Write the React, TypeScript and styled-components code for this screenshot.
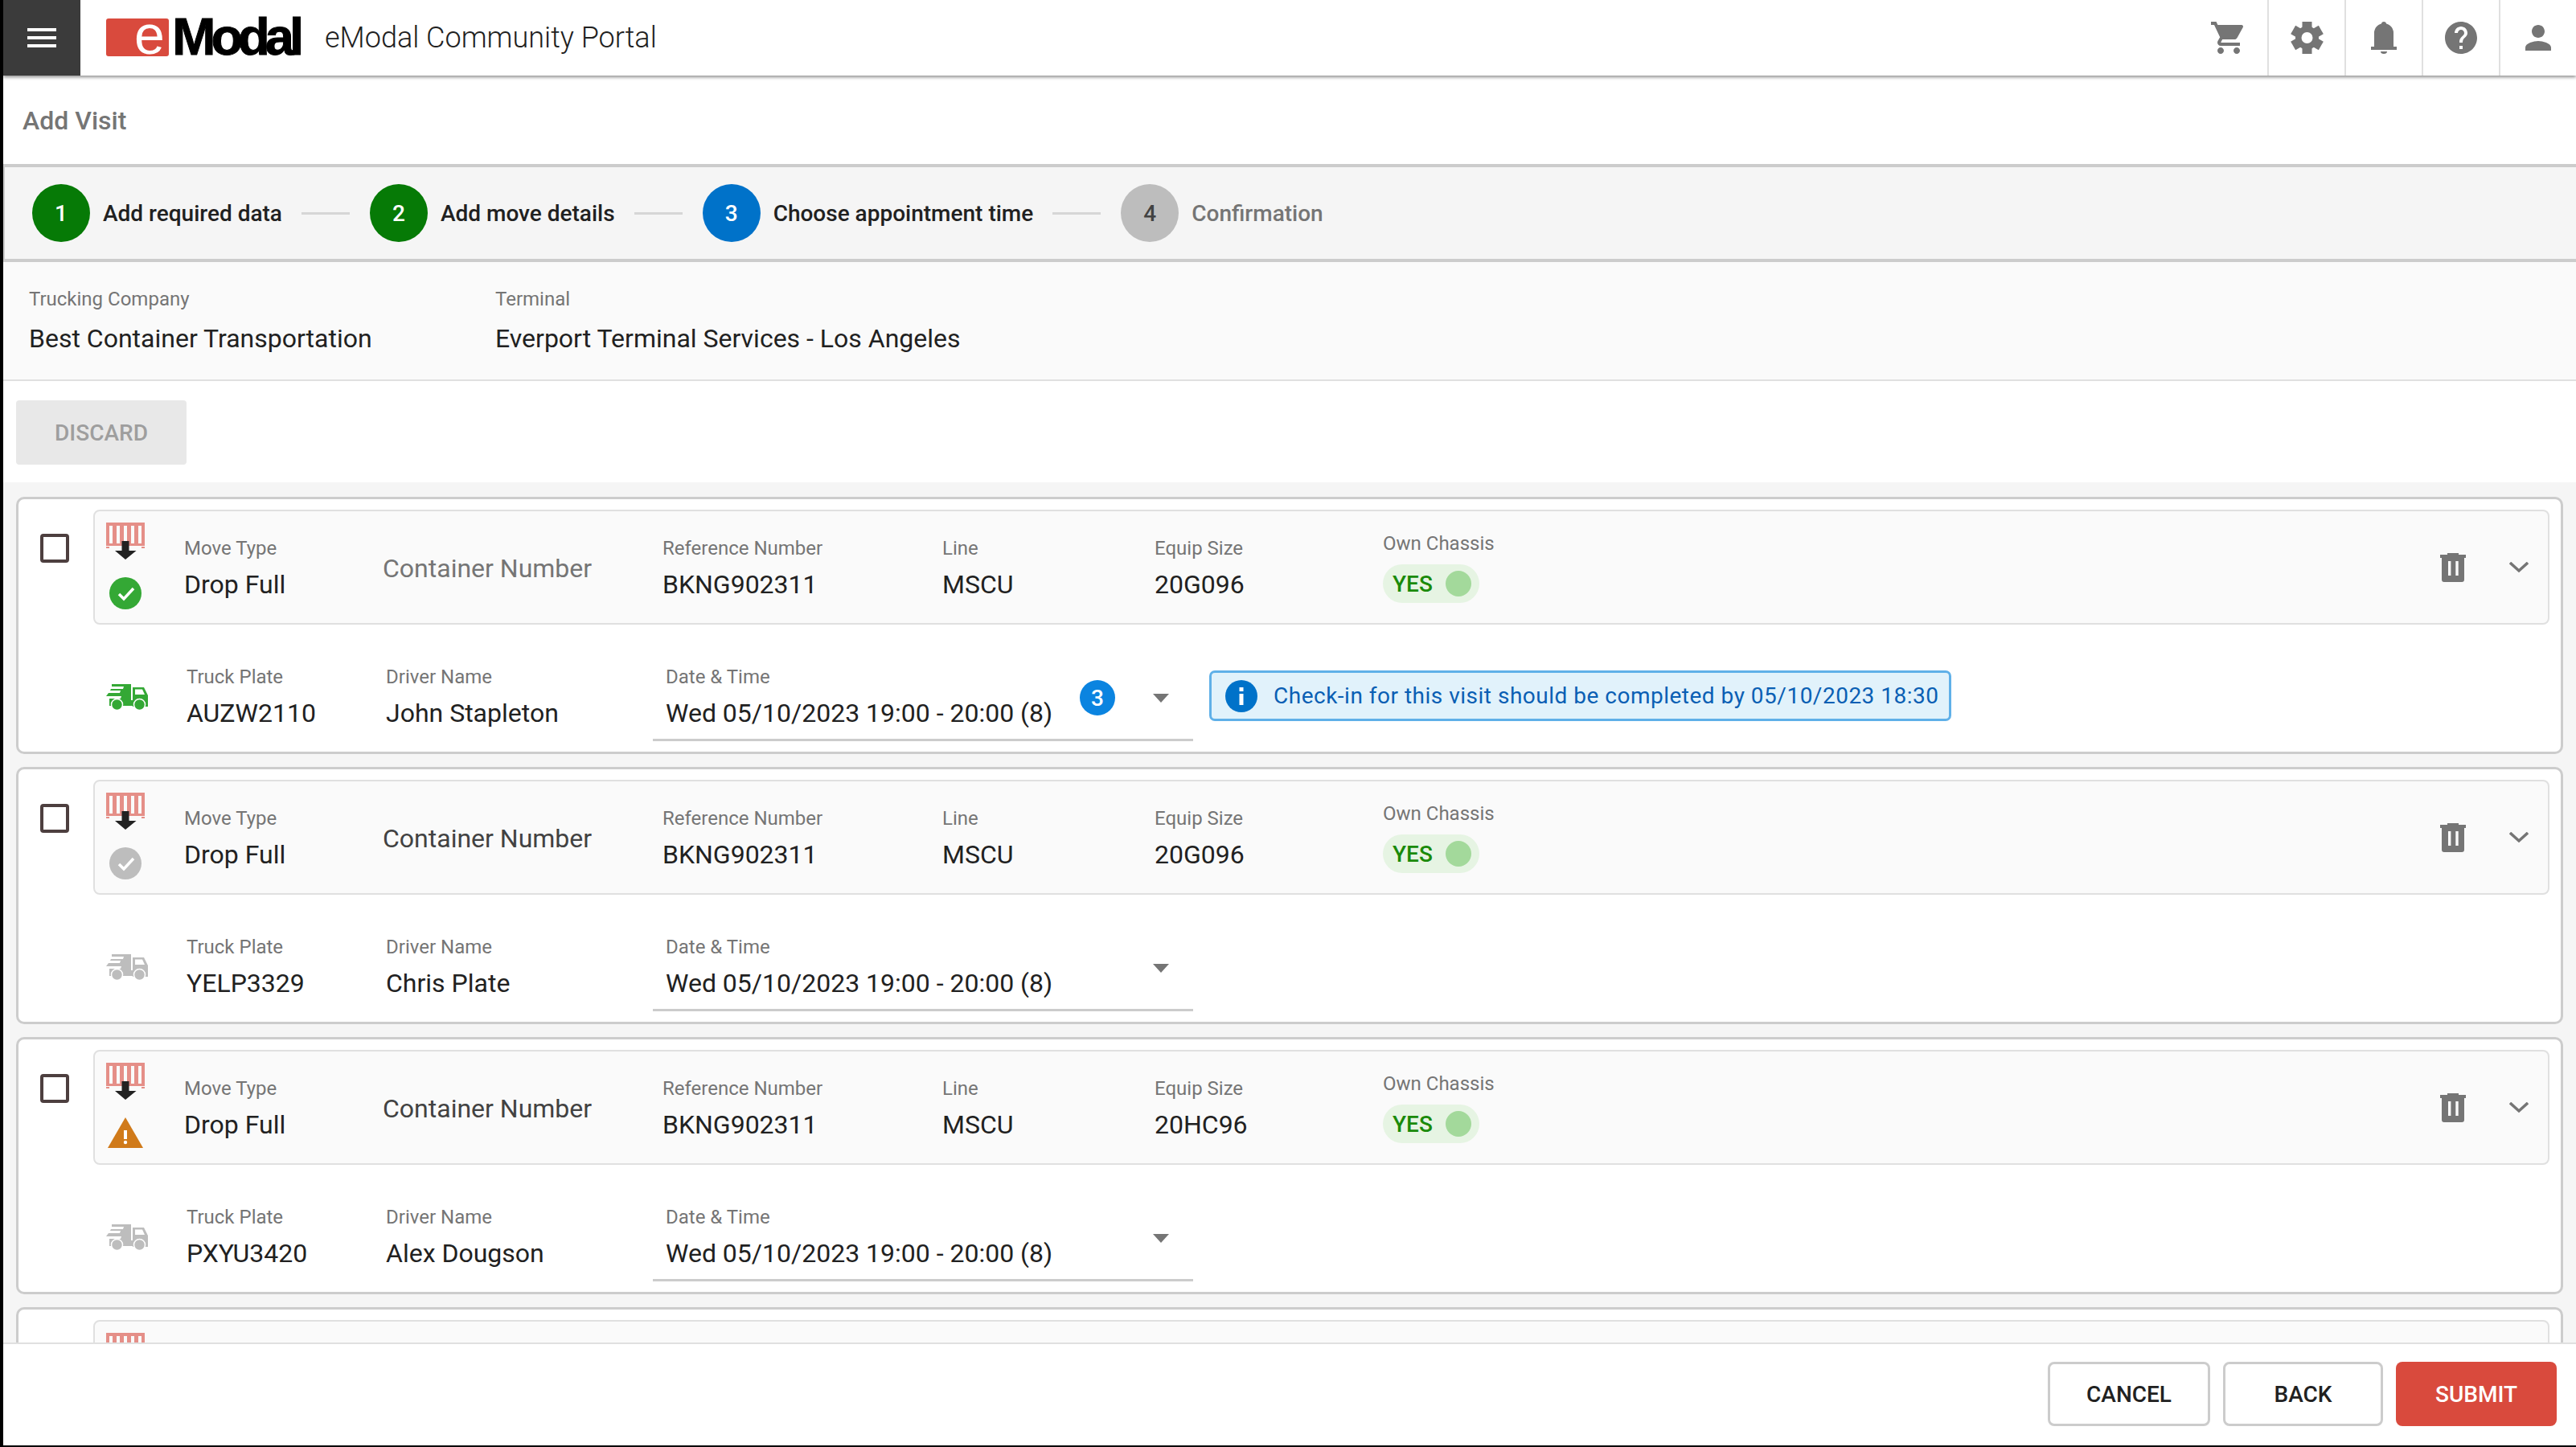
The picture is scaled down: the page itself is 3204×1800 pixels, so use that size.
import React from "react";
import styled, { createGlobalStyle } from "styled-components";
import { MdHelp, MdMenu, MdPerson, MdShoppingCart } from "react-icons/md";

const GlobalStyle = createGlobalStyle`
  html, body {
    margin: 0;
    padding: 0;
    background: #000;
  }
  * {
    box-sizing: border-box;
  }
`;

const Page = styled.div`
  width: 3204px;
  height: 1800px;
  padding: 0 0 2px 4px;
  background: #000;
  font-family: Roboto, "Liberation Sans", sans-serif;
  color: #212121;
  overflow: hidden;
`;

const Shell = styled.div`
  height: 100%;
  display: flex;
  flex-direction: column;
  background: #fff;
`;

const Header = styled.header`
  height: 94px;
  flex: none;
  display: flex;
  position: relative;
  background: #fff;
  box-shadow: 0 2px 4px rgba(0, 0, 0, 0.45);
`;

const MenuButton = styled.div`
  width: 96px;
  display: flex;
  align-items: center;
  justify-content: center;
  background: #3b3b3b;
  color: #fff;
  font-size: 48px;
`;

const Logo = styled.div`
  width: 240px;
  margin-left: 32px;
  margin-top: 22px;
  height: 48px;
  display: flex;
`;

const LogoMark = styled.span`
  width: 79px;
  height: 47px;
  margin-top: 1px;
  border-radius: 3px;
  background: #d94a3d;
  color: #fff;
  font-family: "Liberation Sans", sans-serif;
  font-size: 68px;
  line-height: 40px;
  padding-left: 35px;
`;

const LogoWord = styled.span`
  margin-left: 4px;
  font-family: "Liberation Sans", sans-serif;
  font-weight: 700;
  font-size: 65px;
  line-height: 48px;
  letter-spacing: -6px;
  color: #000;
  -webkit-text-stroke: 1px #000;
`;

const PortalTitle = styled.div`
  margin-left: 32px;
  align-self: center;
  font-size: 36px;
  font-weight: 300;
  color: #212121;
`;

const HeaderIcons = styled.div`
  margin-left: auto;
  display: flex;
`;

const HeaderIcon = styled.div<{ $first?: boolean }>`
  width: 96px;
  display: flex;
  align-items: center;
  justify-content: center;
  font-size: 48px;
  color: #757575;
  border-left: ${(p) => (p.$first ? "none" : "2px solid #e0e0e0")};
`;

const PageTitle = styled.h1`
  margin: 0;
  height: 110px;
  flex: none;
  display: flex;
  align-items: center;
  padding-left: 24px;
  padding-top: 2px;
  font-size: 32px;
  font-weight: 500;
  color: #757575;
`;

const Stepper = styled.div`
  height: 122px;
  flex: none;
  display: flex;
  align-items: center;
  padding-left: 34px;
  background: #f5f5f5;
  border-top: 4px solid #ccc;
  border-bottom: 4px solid #ccc;
  border-left: 2px solid #ccc;
`;

const StepCircle = styled.span<{ $color: string; $dark?: boolean }>`
  width: 72px;
  height: 72px;
  flex: none;
  border-radius: 50%;
  display: flex;
  align-items: center;
  justify-content: center;
  background: ${(p) => p.$color};
  color: ${(p) => (p.$dark ? "#424242" : "#fff")};
  font-size: 28px;
  font-weight: 500;
`;

const StepLabel = styled.span<{ $muted?: boolean }>`
  margin-left: 16px;
  font-size: 28px;
  font-weight: 500;
  color: ${(p) => (p.$muted ? "#757575" : "#212121")};
`;

const StepLine = styled.span`
  width: 60px;
  height: 3px;
  margin: 0 25px 0 24px;
  background: #d6d6d6;
`;

const Summary = styled.div`
  height: 148px;
  flex: none;
  display: flex;
  padding: 28px 0 0 32px;
  background: #fafafa;
  border-bottom: 2px solid #e0e0e0;
`;

const SummaryField = styled.div<{ $w: number }>`
  width: ${(p) => p.$w}px;
`;

const Actions = styled.div`
  height: 126px;
  flex: none;
  padding: 24px 0 0 16px;
`;

const DiscardButton = styled.button`
  width: 212px;
  height: 80px;
  border: none;
  border-radius: 4px;
  background: #e8e8e8;
  color: #9e9e9e;
  font-family: inherit;
  font-size: 28px;
  font-weight: 500;
`;

const VisitList = styled.div`
  flex: 1;
  min-height: 0;
  overflow: hidden;
  display: flex;
  flex-direction: column;
  gap: 16px;
  padding: 18px 16px 0 16px;
  background: #f5f5f5;
`;

const VisitCard = styled.section`
  height: 320px;
  flex: none;
  padding: 13px 14px 0 0;
  background: #fff;
  border: 3px solid #ccc;
  border-radius: 10px;
`;

const CardTop = styled.div`
  display: flex;
`;

const CheckCol = styled.div`
  width: 93px;
  flex: none;
  padding: 30px 0 0 27px;
`;

const Checkbox = styled.span`
  display: block;
  width: 36px;
  height: 36px;
  border: 4px solid #4d3f3f;
  border-radius: 4px;
`;

const MoveBox = styled.div`
  flex: 1;
  height: 143px;
  display: flex;
  align-items: flex-start;
  padding: 14px 0 0 14px;
  background: #fafafa;
  border: 2px solid #e0e0e0;
  border-radius: 8px;
`;

const MoveIcons = styled.div`
  width: 97px;
  flex: none;
  display: flex;
  flex-direction: column;
  align-items: flex-start;
`;

const StatusSlot = styled.div`
  width: 48px;
  margin-top: 22px;
  display: flex;
  justify-content: center;
`;

const Field = styled.div<{ $w: number }>`
  width: ${(p) => p.$w}px;
  flex: none;
`;

const MoveField = styled(Field)`
  padding-top: 14px;
`;

const FieldLabel = styled.div`
  height: 36px;
  font-size: 24px;
  line-height: 36px;
  color: #757575;
`;

const FieldValue = styled.div`
  height: 52px;
  margin-top: 1px;
  font-size: 32px;
  line-height: 52px;
  color: #212121;
  white-space: nowrap;
`;

const SummaryValue = styled(FieldValue)`
  margin-top: 5px;
`;

const ContainerNumber = styled.div<{ $w: number; $muted?: boolean }>`
  width: ${(p) => p.$w}px;
  flex: none;
  padding-top: 31px;
  font-size: 32px;
  line-height: 52px;
  color: ${(p) => (p.$muted ? "#757575" : "#424242")};
`;

const ChassisField = styled.div`
  flex: 1;
  padding-top: 8px;
`;

const Toggle = styled.div`
  width: 120px;
  height: 48px;
  margin-top: 8px;
  display: flex;
  align-items: center;
  justify-content: space-between;
  padding: 0 10px 0 12px;
  border-radius: 24px;
  background: #e6f4e3;
  color: #1a8a0a;
  font-size: 28px;
  font-weight: 500;
`;

const ToggleKnob = styled.span`
  width: 32px;
  height: 32px;
  border-radius: 50%;
  background: #a3d99b;
`;

const RowIcons = styled.div`
  display: flex;
  align-items: center;
  gap: 54px;
  margin-top: 38px;
  padding-right: 24px;
`;

const CardBottom = styled.div`
  display: flex;
  align-items: flex-start;
  padding: 47px 0 0 109px;
`;

const TruckSlot = styled.div`
  width: 100px;
  flex: none;
  padding-top: 27px;
`;

const DateSelect = styled.div`
  width: 672px;
  height: 98px;
  flex: none;
  position: relative;
  padding-left: 16px;
  border-bottom: 3px solid #ccc;
`;

const CountBadge = styled.span`
  position: absolute;
  left: 531px;
  top: 22px;
  width: 44px;
  height: 44px;
  border-radius: 50%;
  display: flex;
  align-items: center;
  justify-content: center;
  background: #0b84e0;
  color: #fff;
  font-size: 28px;
  font-weight: 500;
`;

const SelectArrow = styled.span`
  position: absolute;
  right: 30px;
  top: 39px;
  border-left: 10px solid transparent;
  border-right: 10px solid transparent;
  border-top: 11px solid #757575;
`;

const InfoBanner = styled.div`
  width: 923px;
  height: 63px;
  flex: none;
  margin: 10px 0 0 20px;
  display: flex;
  align-items: center;
  gap: 20px;
  padding-left: 17px;
  background: #e1f2fb;
  border: 3px solid #5fb0e8;
  border-radius: 7px;
  color: #0a5fb4;
  font-size: 28px;
  letter-spacing: 0.5px;
  white-space: nowrap;
`;

const InfoDot = styled.span`
  width: 40px;
  height: 40px;
  flex: none;
  border-radius: 50%;
  display: flex;
  align-items: center;
  justify-content: center;
  background: #0072c9;
`;

const Footer = styled.footer`
  height: 128px;
  flex: none;
  display: flex;
  justify-content: flex-end;
  gap: 16px;
  padding: 22px 24px 0 0;
  background: #fff;
  border-top: 2px solid #e0e0e0;
`;

const FooterButton = styled.button<{ $w: number; $primary?: boolean }>`
  width: ${(p) => p.$w}px;
  height: 80px;
  border: ${(p) => (p.$primary ? "none" : "3px solid #ccc")};
  border-radius: 8px;
  background: ${(p) => (p.$primary ? "#d94a3d" : "#fff")};
  color: ${(p) => (p.$primary ? "#fff" : "#212121")};
  font-family: inherit;
  font-size: 28px;
  font-weight: 500;
`;

const GearIcon = () => (
  <svg width="41" height="40" viewBox="-20.500 -20 41 40">
    <circle r="14.500" fill="#757575" />
    {[0, 60, 120].map((deg) => (
      <rect
        key={deg}
        x="-6"
        y="-20"
        width="12"
        height="40"
        fill="#757575"
        transform={`rotate(${deg})`}
      />
    ))}
    <circle r="7" fill="#fff" />
  </svg>
);

const BellIcon = () => (
  <svg width="32" height="40" viewBox="0 0 32 40">
    <circle cx="16" cy="3" r="3" fill="#757575" />
    <path
      d="M4 31V14a12 12 0 0 1 24 0v17h4v4H0v-4zM12 37h8a4 3 0 0 1-8 0z"
      fill="#757575"
    />
  </svg>
);

const ContainerDropIcon = () => (
  <svg width="48" height="46" viewBox="0 0 48 46">
    <rect x="0" y="0" width="48" height="29" fill="#e58f88" />
    <rect x="0" y="29" width="48" height="2" fill="#fafafa" />
    <rect x="0" y="30" width="4" height="2" fill="#e58f88" />
    <rect x="44" y="30" width="4" height="2" fill="#e58f88" />
    {[4, 13, 22, 31, 40].map((x) => (
      <rect key={x} x={x} y="4" width="4" height="22" fill="#fafafa" />
    ))}
    <path d="M19.500 23h9v12h9L24 46 11 35h8.500z" fill="#222" />
  </svg>
);

const CheckStatus = ({ color }: { color: string }) => (
  <svg width="40" height="40" viewBox="0 0 40 40">
    <circle cx="20" cy="20" r="20" fill={color} />
    <path d="M12 21l6 6 12-13" fill="none" stroke="#fff" strokeWidth="3.500" />
  </svg>
);

const WarningStatus = () => (
  <svg width="44" height="38" viewBox="0 0 44 38">
    <path d="M22 0l22 38H0z" fill="#d07a1a" />
    <rect x="20" y="16" width="4" height="11" fill="#fff" />
    <circle cx="22" cy="31" r="2.200" fill="#fff" />
  </svg>
);

const TruckIcon = ({ color }: { color: string }) => (
  <svg width="52" height="32" viewBox="0 0 52 32">
    <path d="M7 0h24v22H4v-4h14l1-3H0l3-4h14l1-3H5l1-2h15l1-3H7z" fill={color} />
    <path
      d="M33 4h14l5 10v14H33zM36 6.500V13h12l-3-6.500z"
      fill={color}
      fillRule="evenodd"
    />
    <rect x="4" y="20" width="48" height="7" fill={color} />
    <circle cx="13.500" cy="25.500" r="7" fill={color} stroke="#fff" strokeWidth="1.500" />
    <circle cx="41.500" cy="25.500" r="7" fill={color} stroke="#fff" strokeWidth="1.500" />
  </svg>
);

const TrashIcon = () => (
  <svg width="32" height="36" viewBox="0 0 32 36">
    <path d="M9 0h14v2h9v4H0V2h9z" fill="#757575" />
    <path
      d="M2 6h28v27a3 3 0 0 1-3 3H5a3 3 0 0 1-3-3zM10 10v18h3.400V10zM19.300 10v18h3.400V10z"
      fill="#757575"
      fillRule="evenodd"
    />
  </svg>
);

const ChevronIcon = () => (
  <svg width="24" height="14" viewBox="0 0 24 14">
    <path d="M1 1l11 10L23 1" fill="none" stroke="#757575" strokeWidth="3.500" />
  </svg>
);

const InfoGlyph = () => (
  <svg width="6" height="22" viewBox="0 0 6 22">
    <rect x="0.500" y="0" width="5" height="5" fill="#fff" />
    <rect x="0.500" y="8" width="5" height="14" fill="#fff" />
  </svg>
);

type Visit = {
  status: "done" | "pending" | "warning";
  equip: string;
  plate: string;
  driver: string;
  active?: boolean;
};

const visits: Visit[] = [
  { status: "done", equip: "20G096", plate: "AUZW2110", driver: "John Stapleton", active: true },
  { status: "pending", equip: "20G096", plate: "YELP3329", driver: "Chris Plate" },
  { status: "warning", equip: "20HC96", plate: "PXYU3420", driver: "Alex Dougson" },
];

const steps = [
  { label: "Add required data", color: "#067a06" },
  { label: "Add move details", color: "#067a06" },
  { label: "Choose appointment time", color: "#0072c9" },
  { label: "Confirmation", color: "#bdbdbd", muted: true },
];

function VisitRow({ visit }: { visit: Visit }) {
  return (
    <VisitCard>
      <CardTop>
        <CheckCol>
          <Checkbox />
        </CheckCol>
        <MoveBox>
          <MoveIcons>
            <ContainerDropIcon />
            <StatusSlot>
              {visit.status === "done" && <CheckStatus color="#34a835" />}
              {visit.status === "pending" && <CheckStatus color="#bdbdbd" />}
              {visit.status === "warning" && <WarningStatus />}
            </StatusSlot>
          </MoveIcons>
          <MoveField $w={247}>
            <FieldLabel>Move Type</FieldLabel>
            <FieldValue>Drop Full</FieldValue>
          </MoveField>
          <ContainerNumber $w={348} $muted={visit.active}>
            Container Number
          </ContainerNumber>
          <MoveField $w={348}>
            <FieldLabel>Reference Number</FieldLabel>
            <FieldValue>BKNG902311</FieldValue>
          </MoveField>
          <MoveField $w={264}>
            <FieldLabel>Line</FieldLabel>
            <FieldValue>MSCU</FieldValue>
          </MoveField>
          <MoveField $w={284}>
            <FieldLabel>Equip Size</FieldLabel>
            <FieldValue>{visit.equip}</FieldValue>
          </MoveField>
          <ChassisField>
            <FieldLabel>Own Chassis</FieldLabel>
            <Toggle>
              YES
              <ToggleKnob />
            </Toggle>
          </ChassisField>
          <RowIcons>
            <TrashIcon />
            <ChevronIcon />
          </RowIcons>
        </MoveBox>
      </CardTop>
      <CardBottom>
        <TruckSlot>
          <TruckIcon color={visit.active ? "#34a835" : "#bdbdbd"} />
        </TruckSlot>
        <Field $w={248}>
          <FieldLabel>Truck Plate</FieldLabel>
          <FieldValue>{visit.plate}</FieldValue>
        </Field>
        <Field $w={332}>
          <FieldLabel>Driver Name</FieldLabel>
          <FieldValue>{visit.driver}</FieldValue>
        </Field>
        <DateSelect>
          <FieldLabel>Date &amp; Time</FieldLabel>
          <FieldValue>Wed 05/10/2023 19:00 - 20:00 (8)</FieldValue>
          {visit.active && <CountBadge>3</CountBadge>}
          <SelectArrow />
        </DateSelect>
        {visit.active && (
          <InfoBanner>
            <InfoDot>
              <InfoGlyph />
            </InfoDot>
            Check-in for this visit should be completed by 05/10/2023 18:30
          </InfoBanner>
        )}
      </CardBottom>
    </VisitCard>
  );
}

export default function App(): React.ReactElement {
  return (
    <Page>
      <GlobalStyle />
      <Shell>
        <Header>
          <MenuButton>
            <MdMenu />
          </MenuButton>
          <Logo>
            <LogoMark>e</LogoMark>
            <LogoWord>Modal</LogoWord>
          </Logo>
          <PortalTitle>eModal Community Portal</PortalTitle>
          <HeaderIcons>
            <HeaderIcon $first>
              <MdShoppingCart />
            </HeaderIcon>
            <HeaderIcon>
              <GearIcon />
            </HeaderIcon>
            <HeaderIcon>
              <BellIcon />
            </HeaderIcon>
            <HeaderIcon>
              <MdHelp />
            </HeaderIcon>
            <HeaderIcon>
              <MdPerson />
            </HeaderIcon>
          </HeaderIcons>
        </Header>
        <PageTitle>Add Visit</PageTitle>
        <Stepper>
          {steps.map((step, i) => (
            <React.Fragment key={step.label}>
              {i > 0 && <StepLine />}
              <StepCircle $color={step.color} $dark={step.muted}>
                {i + 1}
              </StepCircle>
              <StepLabel $muted={step.muted}>{step.label}</StepLabel>
            </React.Fragment>
          ))}
        </Stepper>
        <Summary>
          <SummaryField $w={580}>
            <FieldLabel>Trucking Company</FieldLabel>
            <SummaryValue>Best Container Transportation</SummaryValue>
          </SummaryField>
          <SummaryField $w={800}>
            <FieldLabel>Terminal</FieldLabel>
            <SummaryValue>Everport Terminal Services - Los Angeles</SummaryValue>
          </SummaryField>
        </Summary>
        <Actions>
          <DiscardButton>DISCARD</DiscardButton>
        </Actions>
        <VisitList>
          {visits.map((visit) => (
            <VisitRow key={visit.plate} visit={visit} />
          ))}
          <VisitCard>
            <CardTop>
              <CheckCol />
              <MoveBox>
                <MoveIcons>
                  <ContainerDropIcon />
                </MoveIcons>
              </MoveBox>
            </CardTop>
          </VisitCard>
        </VisitList>
        <Footer>
          <FooterButton $w={202}>CANCEL</FooterButton>
          <FooterButton $w={199}>BACK</FooterButton>
          <FooterButton $w={200} $primary>
            SUBMIT
          </FooterButton>
        </Footer>
      </Shell>
    </Page>
  );
}
